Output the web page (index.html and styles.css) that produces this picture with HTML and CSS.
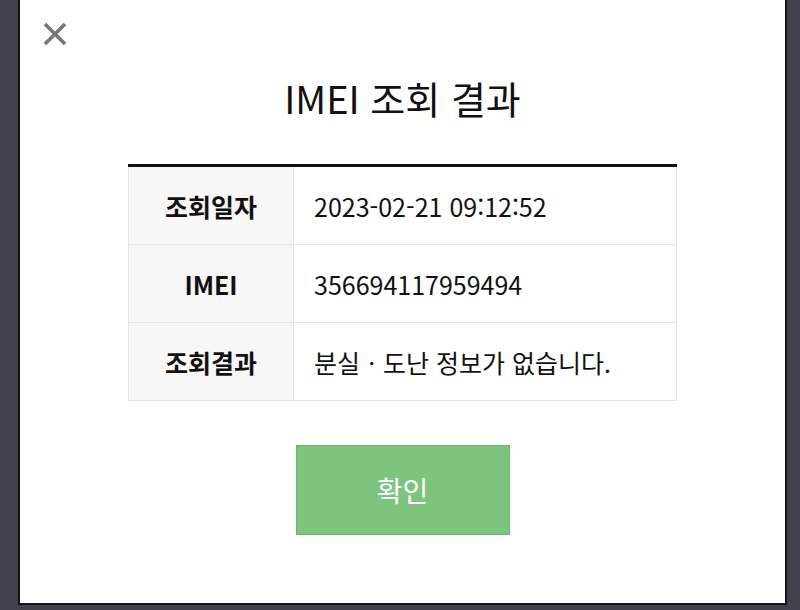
FILE: index.html
```html
<!DOCTYPE html>
<html lang="ko">
<head>
<meta charset="utf-8">
<title>IMEI 조회 결과</title>
<link rel="stylesheet" href="styles.css">
</head>
<body>
<div class="modal">
  <button class="close" aria-label="닫기">
    <svg width="24" height="24" viewBox="0 0 24 24"><path d="M2 2L22 22M22 2L2 22" stroke="#777" stroke-width="3.6" stroke-linecap="butt"/></svg>
  </button>
  <h1 class="title">IMEI 조회 결과</h1>
  <table class="result">
    <tr><th>조회일자</th><td>2023-02-21 09:12:52</td></tr>
    <tr><th>IMEI</th><td>356694117959494</td></tr>
    <tr><th>조회결과</th><td>분실ㆍ도난 정보가 없습니다.</td></tr>
  </table>
  <div class="actions"><button class="ok">확인</button></div>
</div>
</body>
</html>
```
FILE: styles.css
```css
html, body { margin: 0; padding: 0; }
body {
  background: #40424c;
  width: 800px;
  height: 610px;
  overflow: hidden;
  font-family: "Noto Sans CJK KR", "Noto Sans", sans-serif;
}
.modal {
  position: relative;
  margin-left: 18px;
  width: 769px;
  height: 605px;
  background: #fff;
  border: 2px solid #15161a;
  border-top: none;
  box-sizing: border-box;
}
.close {
  position: absolute;
  left: 23px;
  top: 22px;
  padding: 0;
  border: 0;
  background: none;
  width: 24px;
  height: 24px;
}
.close svg { display: block; }
.title {
  margin: 0;
  padding-top: 70px;
  text-align: center;
  font-size: 38px;
  font-weight: 400;
  line-height: 56px;
  color: #111;
  letter-spacing: 0;
}
.result {
  margin: 38px 0 0 108px;
  width: 549px;
  border-collapse: collapse;
  border-top: 3px solid #111;
}
.result th, .result td {
  height: 77px;
  border: 1px solid #e4e4e4;
  font-size: 25px;
  color: #111;
  padding: 0;
}
.result tr:first-child th, .result tr:first-child td { border-top: none; }
.result th {
  width: 164px;
  background: #f7f7f7;
  font-weight: 700;
  text-align: center;
}
.result td {
  padding-left: 20px;
  text-align: left;
  font-weight: 400;
}
.actions {
  display: flex;
  justify-content: center;
  margin-top: 44px;
}
.ok {
  width: 214px;
  height: 90px;
  border: 1px solid #6fb171;
  background: #7dc47f;
  color: #fff;
  font-family: "Noto Sans CJK KR", "Noto Sans", sans-serif;
  font-size: 28px;
  font-weight: 400;
  padding: 0;
}
```
